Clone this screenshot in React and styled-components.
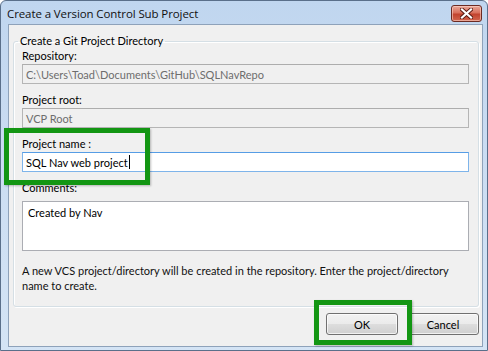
import styled, { createGlobalStyle } from "styled-components";

const GlobalStyle = createGlobalStyle`
  html, body {
    margin: 0;
    padding: 0;
    background: #ffffff;
  }
  * {
    box-sizing: border-box;
  }
`;

const uiFont = `Lato, "Open Sans", "Liberation Sans", sans-serif`;
const titleFont = `"Open Sans", "Noto Sans", "Liberation Sans", sans-serif`;

const Window = styled.div`
  width: 488px;
  height: 351px;
  display: flex;
  flex-direction: column;
  padding: 0 4px 3px 7px;
  border: 1px solid #5a6f8a;
  border-radius: 6px 6px 0 0;
  background: linear-gradient(180deg, #c0d6ef 0%, #cadcf2 40%, #d4e4f5 100%);
  font-family: ${uiFont};
  font-size: 11px;
  color: #000;
`;

const TitleBar = styled.div`
  height: 23px;
  display: flex;
  align-items: center;
  justify-content: space-between;
  margin-left: -1px;
  padding-top: 1px;
`;

const Title = styled.span`
  font-family: ${titleFont};
  font-size: 11.5px;
  letter-spacing: -0.1px;
  color: #111;
`;

const CloseButton = styled.div`
  width: 31px;
  height: 17px;
  margin-right: 1px;
  border: 1px solid #6b2a22;
  border-radius: 3px;
  background: linear-gradient(180deg, #e8a798 0%, #d9705c 45%, #c2432e 55%, #d2664f 100%);
  display: flex;
  align-items: center;
  justify-content: center;
  box-shadow: inset 0 0 0 1px rgba(255, 220, 210, 0.55);
`;

const Client = styled.div`
  position: relative;
  flex: 1;
  display: flex;
  flex-direction: column;
  background: #f0f0f0;
  border: 1px solid #8ea2ba;
  padding: 9px 3px 0 4px;
`;

const GroupBox = styled.fieldset`
  margin: 0;
  padding: 0 9px 13px 8px;
  border: 1px solid #d5dfe5;
  border-radius: 3px;
  box-shadow: inset 1px 1px 0 #fff, 1px 1px 0 #fff;
  display: flex;
  flex-direction: column;
`;

const Legend = styled.legend`
  margin-left: -4px;
  padding: 0 2px;
  line-height: 14px;
  font-size: 11px;
`;

const Field = styled.div`
  display: flex;
  flex-direction: column;
  margin-top: ${(p) => p.$gap ?? 8}px;
`;

const Label = styled.label`
  display: block;
  line-height: 16px;
  height: 16px;
`;

const TextBox = styled.div`
  height: 20px;
  display: flex;
  align-items: center;
  padding: 0 3px;
  border: 1px solid ${(p) => (p.$disabled ? "#b5b5b5" : p.$focused ? "#7eb4ea" : "#abadb3")};
  border-top-color: ${(p) => (p.$disabled ? "#adadad" : p.$focused ? "#569de5" : "#abadb3")};
  background: ${(p) => (p.$disabled ? "#f0f0f0" : "#fff")};
  color: ${(p) => (p.$disabled ? "#6d6d6d" : "#000")};
  white-space: nowrap;
`;

const Caret = styled.span`
  display: inline-block;
  width: 1px;
  height: 14px;
  background: #000;
  margin-left: 1px;
`;

const TextArea = styled.div`
  height: 50px;
  margin-top: 5px;
  padding: 3px 5px;
  border: 1px solid #abadb3;
  background: #fff;
  line-height: 16px;
`;

const Info = styled.p`
  margin: 12px 0 0;
  line-height: 15px;
  color: #111;
`;

const ButtonRow = styled.div`
  display: flex;
  justify-content: flex-end;
  gap: 9px;
  margin-top: 6px;
`;

const Button = styled.button`
  width: 72px;
  height: 22px;
  border: 1px solid #707070;
  border-radius: 3px;
  font-family: ${uiFont};
  font-size: 11px;
  color: #000;
  background: linear-gradient(180deg, #f2f2f2 0%, #ebebeb 48%, #dddddd 52%, #cfcfcf 100%);
  box-shadow: inset 0 0 0 1px rgba(255, 255, 255, 0.7);
  padding: 0;
`;

const Highlight = styled.div`
  position: absolute;
  border: 5px solid #139613;
  box-shadow: 1px 1px 2px rgba(0, 0, 0, 0.25);
  pointer-events: none;
`;

function CloseGlyph() {
  return (
    <svg width="13" height="11" viewBox="0 0 13 11">
      <path d="M2 1.5 L11 9.5 M11 1.5 L2 9.5" stroke="#5a1a12" strokeWidth="4" strokeLinecap="square" />
      <path d="M2 1.5 L11 9.5 M11 1.5 L2 9.5" stroke="#ffffff" strokeWidth="2.2" strokeLinecap="square" />
    </svg>
  );
}

export default function App() {
  return (
    <>
      <GlobalStyle />
      <Window>
        <TitleBar>
          <Title>Create a Version Control Sub Project</Title>
          <CloseButton>
            <CloseGlyph />
          </CloseButton>
        </TitleBar>
        <Client>
          <GroupBox>
            <Legend>Create a Git Project Directory</Legend>
            <Field $gap={0}>
              <Label>Repository:</Label>
              <TextBox $disabled>C:\Users\Toad\Documents\GitHub\SQLNavRepo</TextBox>
            </Field>
            <Field>
              <Label>Project root:</Label>
              <TextBox $disabled>VCP Root</TextBox>
            </Field>
            <Field>
              <Label>Project name :</Label>
              <TextBox $focused>
                SQL Nav web project
                <Caret />
              </TextBox>
            </Field>
            <Field>
              <Label>Comments:</Label>
              <TextArea>Created by Nav</TextArea>
            </Field>
            <Info>
              A new VCS project/directory will be created in the repository. Enter the project/directory
              name to create.
            </Info>
          </GroupBox>
          <ButtonRow>
            <Button>OK</Button>
            <Button>Cancel</Button>
          </ButtonRow>
          <Highlight style={{ left: -5, top: 103, width: 146, height: 57 }} />
          <Highlight style={{ left: 305, top: 275, width: 98, height: 45 }} />
        </Client>
      </Window>
    </>
  );
}
